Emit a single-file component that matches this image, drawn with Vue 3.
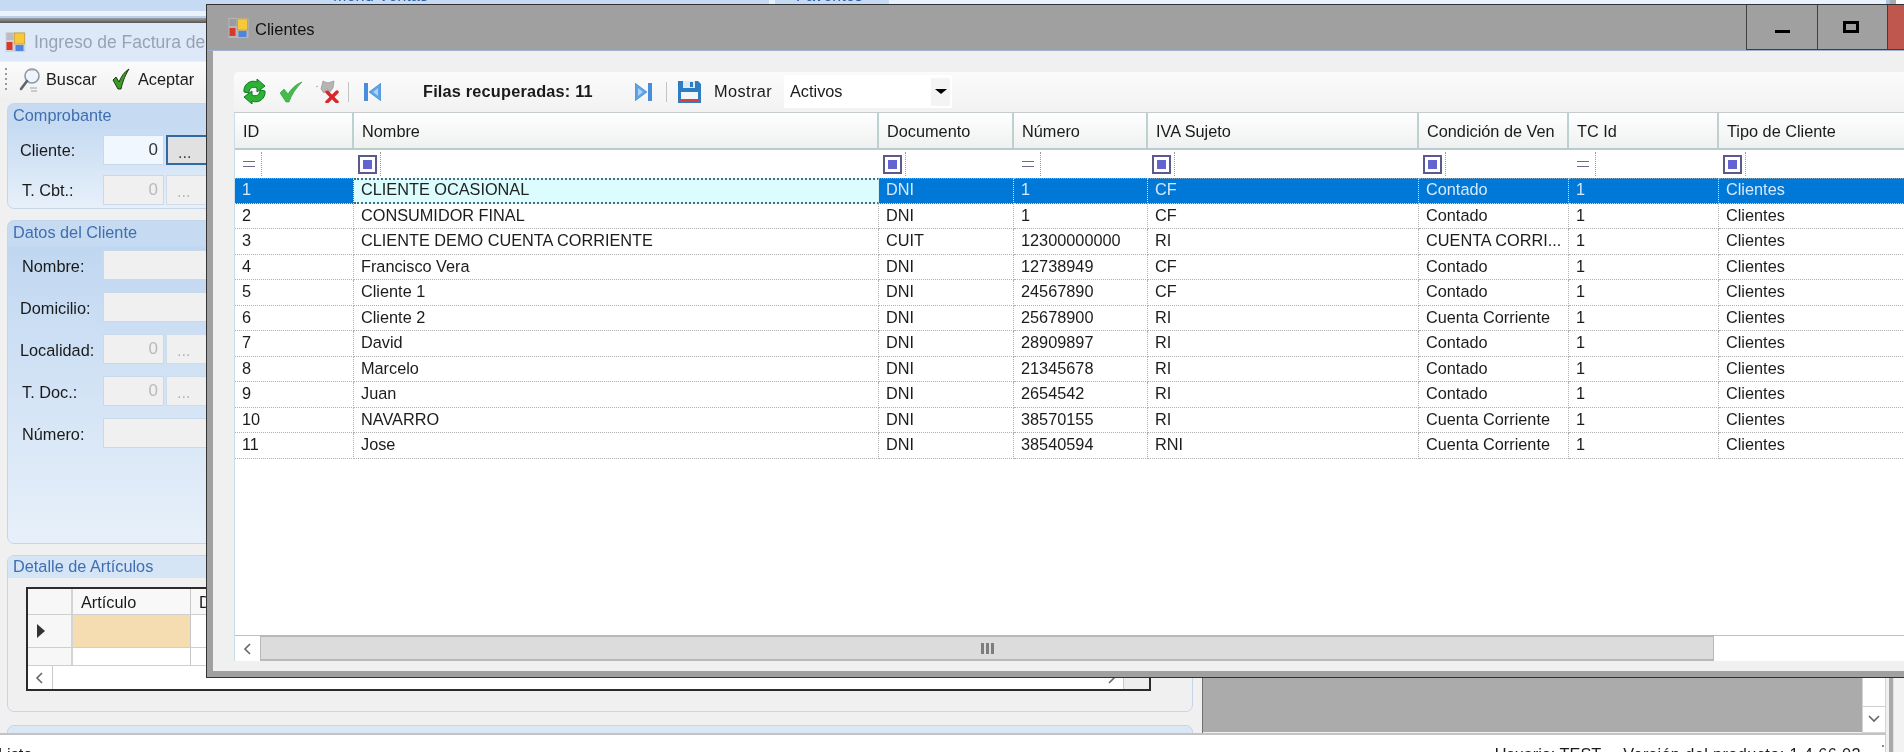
<script setup>
const columns = [
  { name: 'ID', filter: 'eq' },
  { name: 'Nombre', filter: 'box' },
  { name: 'Documento', filter: 'box' },
  { name: 'Número', filter: 'eq' },
  { name: 'IVA Sujeto', filter: 'box' },
  { name: 'Condición de Ven', filter: 'box' },
  { name: 'TC Id', filter: 'eq' },
  { name: 'Tipo de Cliente', filter: 'box' },
]
const rows = [
  ['1', 'CLIENTE OCASIONAL', 'DNI', '1', 'CF', 'Contado', '1', 'Clientes'],
  ['2', 'CONSUMIDOR FINAL', 'DNI', '1', 'CF', 'Contado', '1', 'Clientes'],
  ['3', 'CLIENTE DEMO CUENTA CORRIENTE', 'CUIT', '12300000000', 'RI', 'CUENTA CORRI...', '1', 'Clientes'],
  ['4', 'Francisco Vera', 'DNI', '12738949', 'CF', 'Contado', '1', 'Clientes'],
  ['5', 'Cliente 1', 'DNI', '24567890', 'CF', 'Contado', '1', 'Clientes'],
  ['6', 'Cliente 2', 'DNI', '25678900', 'RI', 'Cuenta Corriente', '1', 'Clientes'],
  ['7', 'David', 'DNI', '28909897', 'RI', 'Contado', '1', 'Clientes'],
  ['8', 'Marcelo', 'DNI', '21345678', 'RI', 'Contado', '1', 'Clientes'],
  ['9', 'Juan', 'DNI', '2654542', 'RI', 'Contado', '1', 'Clientes'],
  ['10', 'NAVARRO', 'DNI', '38570155', 'RI', 'Cuenta Corriente', '1', 'Clientes'],
  ['11', 'Jose', 'DNI', '38540594', 'RNI', 'Cuenta Corriente', '1', 'Clientes'],
]
</script>

<template>
  <div class="screen">
    <div class="strip">
      <div class="tabs">
        <div class="tab first"><span>Menú Ventas</span></div>
        <div class="tab second"><span>Favoritos</span></div>
        <div class="tabrest"></div>
        <div class="tabedge"></div>
        <div class="tabgrey"></div>
        <div class="tabwhite"></div>
      </div>
      <div class="band"></div>
      <div class="darkline"></div>
    </div>

    <div class="body">
      <div class="maincol">
        <div class="work">
          <div class="form">
            <div class="formtitle">
              <svg class="appicon" viewBox="0 0 20 20">
                <rect width="20" height="20" fill="#cfd3d8" />
                <rect x="1" y="1" width="7" height="7" fill="#b9bcc2" />
                <rect x="9" y="1" width="10" height="11" fill="#f7c93a" stroke="#c99a1c" stroke-width=".7" />
                <rect x="1" y="10" width="6" height="8" fill="#d8392c" />
                <rect x="10" y="13" width="8" height="6" fill="#4d86dc" />
              </svg>
              <span>Ingreso de Factura de</span>
            </div>
            <div class="formbar">
              <div class="grip"></div>
              <svg class="searchicon" viewBox="0 0 22 25">
                <circle cx="13" cy="9" r="7" fill="#eef4fa" stroke="#8a99a8" stroke-width="1.6" />
                <path d="M8 14 2 22" stroke="#5d6570" stroke-width="2.6" stroke-linecap="round" />
                <path d="M10 3h5M11 21h7M12 24h6" stroke="#9aa4ae" stroke-width="1.2" />
              </svg>
              <span class="barlabel">Buscar</span>
              <svg class="okicon" viewBox="0 0 18 22">
                <path d="M1 12 4 9l3 5c2-5 5-10 10-13-3 5-6 11-8 20H6Z" fill="#3c9a28" stroke="#1f3d12" stroke-width="1" />
              </svg>
              <span class="barlabel">Aceptar</span>
            </div>

            <div class="panels">
              <section class="panel blue p1">
                <h3>Comprobante</h3>
                <div class="fields f1">
                  <div class="field">
                    <label>Cliente:</label>
                    <div class="input num active">0</div>
                    <div class="dots focus">...</div>
                  </div>
                  <div class="field">
                    <label class="in">T. Cbt.:</label>
                    <div class="input num">0</div>
                    <div class="dots">...</div>
                  </div>
                </div>
              </section>

              <section class="panel blue p2">
                <h3>Datos del Cliente</h3>
                <div class="fields f2">
                  <div class="field">
                    <label class="in">Nombre:</label>
                    <div class="input wide"></div>
                  </div>
                  <div class="field">
                    <label>Domicilio:</label>
                    <div class="input wide"></div>
                  </div>
                  <div class="field">
                    <label>Localidad:</label>
                    <div class="input num">0</div>
                    <div class="dots">...</div>
                  </div>
                  <div class="field">
                    <label class="in">T. Doc.:</label>
                    <div class="input num">0</div>
                    <div class="dots">...</div>
                  </div>
                  <div class="field">
                    <label class="in">Número:</label>
                    <div class="input wide"></div>
                  </div>
                </div>
              </section>

              <section class="panel p3">
                <h3>Detalle de Artículos</h3>
                <div class="subgrid">
                  <div class="subhead">
                    <div class="rh"></div>
                    <div class="sc">Artículo</div>
                    <div class="sc rest">Descripción</div>
                  </div>
                  <div class="subrow one">
                    <div class="rh"><i class="rowarrow"></i></div>
                    <div class="sc peach"></div>
                    <div class="sc rest"></div>
                  </div>
                  <div class="subrow two">
                    <div class="rh"></div>
                    <div class="sc"></div>
                    <div class="sc rest"></div>
                  </div>
                  <div class="subscroll">
                    <div class="sb">
                      <svg viewBox="0 0 10 14" class="chev"><path d="M7 2 2 7l5 5" /></svg>
                    </div>
                    <div class="sbfill"></div>
                    <div class="sb">
                      <svg viewBox="0 0 10 14" class="chev"><path d="M3 2l5 5-5 5" /></svg>
                    </div>
                    <div class="sbcorner"></div>
                  </div>
                </div>
              </section>

              <section class="panel p4"></section>
            </div>
          </div>
          <div class="mdi"></div>
          <div class="vscroll">
            <div class="vbtn">
              <svg viewBox="0 0 14 10" class="chev"><path d="M2 2l5 5 5-5" /></svg>
            </div>
          </div>
        </div>
        <div class="status">
          <span class="ready">Listo</span>
          <span class="user">Usuario: TEST</span>
          <span class="version">Versión del producto: 1.4.66.02</span>
          <span class="statusdot"></span>
        </div>
      </div>
      <div class="sideedge">
        <div class="se1"></div>
        <div class="se2"></div>
        <div class="se3"></div>
      </div>
    </div>

    <div class="window">
      <div class="wintitle">
        <svg class="appicon" viewBox="0 0 20 20">
          <rect width="20" height="20" fill="#b6b6b6" />
          <rect x="1" y="1" width="7" height="7" fill="#9c9c9c" />
          <rect x="9" y="1" width="10" height="11" fill="#f7c93a" stroke="#c99a1c" stroke-width=".7" />
          <rect x="1" y="10" width="6" height="8" fill="#d8392c" />
          <rect x="10" y="13" width="8" height="6" fill="#4d86dc" />
        </svg>
        <span class="wintext">Clientes</span>
        <div class="winbtns">
          <div class="wb min"><i></i></div>
          <div class="wb max"><i></i></div>
          <div class="wb close"></div>
        </div>
      </div>

      <div class="wincontent">
        <div class="toolbar">
          <svg class="t-refresh" viewBox="1 0 23 25">
            <path d="M2 13C1 6 8 0 15 3V0l8 7-8 6V9C11 7 7 9 7 14Z" fill="#2fb136" stroke="#0c7a22" stroke-width="1" />
            <path d="M23 12c1 7-6 13-13 10v3l-8-7 8-6v4c4 2 8 0 8-5Z" fill="#2fb136" stroke="#0c7a22" stroke-width="1" />
          </svg>
          <svg class="t-check" viewBox="0 0 24 22">
            <path d="M1 12 5 8l4 5C12 8 17 3 23 1 17 7 13 13 10 21H7Z" fill="#46bb4a" stroke="#2c9b3c" stroke-width=".6" />
          </svg>
          <svg class="t-del" viewBox="0 0 24 23">
            <path d="M3 6 1 7M8 1 6 9l3 4 3-5 2 5 4-5 1-7-6 2-3-1Z" fill="#b5b5b5" stroke="#9a9a9a" stroke-width=".8" />
            <path d="M12 12 22 22M22 12 12 22" stroke="#d8262a" stroke-width="3.4" stroke-linecap="round" />
          </svg>
          <i class="tsep"></i>
          <svg class="t-nav" viewBox="0 0 17 18">
            <rect x="0" y="0" width="4" height="18" fill="#4a8edb" />
            <path d="M17 0v18L5 9Z" fill="#5fa2e6" stroke="#3f86d3" stroke-width=".6" />
            <path d="M14 5v8L9 9Z" fill="#a9d2f6" />
          </svg>
          <strong class="rowscount">Filas recuperadas: 11</strong>
          <svg class="t-nav last" viewBox="0 0 17 18">
            <rect x="13" y="0" width="4" height="18" fill="#4a8edb" />
            <path d="M0 0v18L12 9Z" fill="#5fa2e6" stroke="#3f86d3" stroke-width=".6" />
            <path d="M3 5v8l5-4Z" fill="#a9d2f6" />
          </svg>
          <i class="tsep second"></i>
          <svg class="t-save" viewBox="0 0 23 23">
            <path d="M0 1h20l3 3v19H0Z" fill="#2c7dc2" />
            <rect x="5" y="1" width="12" height="7" fill="#dfeaf3" />
            <rect x="12" y="2" width="3" height="5" fill="#2c7dc2" />
            <rect x="3" y="12" width="17" height="8" fill="#f3f6f8" />
            <rect x="1" y="19" width="21" height="3" fill="#d9403a" />
          </svg>
          <span class="mostrar">Mostrar</span>
          <div class="combo">
            <span>Activos</span>
            <div class="combobtn"><i></i></div>
          </div>
        </div>

        <div class="grid">
          <div class="ghead">
            <div v-for="c in columns" :key="c.name" class="hc">{{ c.name }}</div>
          </div>
          <div class="gfilter">
            <div v-for="c in columns" :key="c.name" class="fc">
              <div class="fslot">
                <i v-if="c.filter === 'eq'" class="eq"></i>
                <i v-else class="box"><b></b></i>
              </div>
            </div>
          </div>
          <div
            v-for="(r, ri) in rows"
            :key="r[0]"
            class="grow"
            :class="{ sel: ri === 0 }"
          >
            <div v-for="(v, ci) in r" :key="ci" class="gc" :class="{ cur: ri === 0 && ci === 1 }">{{ v }}</div>
          </div>
          <div class="gempty"></div>
          <div class="hscroll">
            <div class="hleft">
              <svg viewBox="0 0 10 14" class="chev"><path d="M7 2 2 7l5 5" /></svg>
            </div>
            <div class="hthumb"><i></i><i></i><i></i></div>
            <div class="htrack"></div>
          </div>
        </div>
      </div>
    </div>
  </div>
</template>

<style>
html, body { margin: 0; background: #f0f0f0; }
</style>

<style scoped>
.screen {
  position: relative;
  width: 1904px;
  height: 752px;
  overflow: hidden;
  background: #f0f0f0;
  font-family: "Liberation Sans", "Noto Sans", sans-serif;
  font-size: 16.3px;
  color: #1a1a1a;
  filter: blur(0.35px);
}

/* top strip */
.strip { height: 23px; display: flex; flex-direction: column; }
.tabs { height: 11px; display: flex; overflow: hidden; background: #e8f2fd; }
.tab { background: #c6dbf3; color: #2b5c9e; overflow: hidden; }
.tab span { display: block; margin-top: -13px; line-height: 16px; }
.tab.first { width: 769px; padding-left: 333px; box-sizing: border-box; }
.tab.second { width: 114px; margin-left: 6px; padding-left: 21px; box-sizing: border-box; }
.tabrest { flex: 1; }
.tabedge { width: 4px; background: #a9c6e8; }
.tabgrey { width: 6px; background: #aaa; }
.tabwhite { width: 8px; background: #fff; }
.band { height: 5px; background: #eaf2fc; border-bottom: 2px solid #b8d0ee; }
.darkline { height: 5px; background: linear-gradient(#a0a0a0, #555); }

.body { height: 729px; display: flex; }
.maincol { width: 1886px; display: flex; flex-direction: column; }
.work { height: 710px; display: flex; }

/* form behind */
.form {
  width: 1202px;
  border-right: 1px solid #6f6f6f;
  overflow: hidden;
  background: #f0f0f0;
}
.formtitle {
  height: 38px;
  padding: 0 0 0 5px;
  display: flex;
  align-items: center;
  gap: 8px;
  background: #dde9f9;
  color: #98a3b0;
  font-size: 17.5px;
  white-space: nowrap;
}
.appicon { width: 21px; height: 20px; flex: none; }
.formbar {
  height: 40px;
  margin-top: 1px;
  box-sizing: border-box;
  padding-bottom: 6px;
  display: flex;
  align-items: center;
  background: linear-gradient(#fbfbfb, #efefef);
  white-space: nowrap;
}
.grip {
  width: 2px;
  height: 22px;
  margin: 0 0 0 5px;
  background: repeating-linear-gradient(#9a9a9a 0 2px, transparent 2px 5px);
}
.searchicon { width: 22px; height: 25px; margin-left: 12px; }
.barlabel { margin-left: 5px; width: 52px; }
.okicon { width: 18px; height: 22px; margin-left: 14px; }
.formbar .okicon + .barlabel { margin-left: 8px; width: 62px; }

.panels { padding: 1px 9px 0 7px; }
.panel {
  border: 1px solid #c5d6e9;
  border-radius: 7px;
  margin-bottom: 11px;
  box-sizing: border-box;
  overflow: hidden;
}
.panel h3 {
  margin: 0;
  height: 25px;
  padding-left: 5px;
  font-size: 16.3px;
  font-weight: 400;
  line-height: 23px;
  color: #3f6fae;
  background: #c6daf2;
  white-space: nowrap;
}
.panel.blue { background: linear-gradient(#bdd5f0, #e7f0fa); }
.panel.p1 { height: 106px; }
.panel.p2 { height: 324px; }
.panel.p3 { height: 157px; margin-bottom: 13px; }
.panel.p3 h3 { height: 22px; line-height: 21px; background: #d6e5f6; }
.panel.p4 { height: 40px; background: #dbe7f5; }

.fields { display: flex; flex-direction: column; }
.f1 { gap: 10px; padding-top: 6px; }
.f2 { gap: 12px; padding-top: 4px; }
.field { height: 30px; display: flex; align-items: center; }
.field label { width: 95px; padding-left: 12px; box-sizing: border-box; flex: none; }
.f1 .field label { padding-top: 1px; }
.f2 .field label { padding-top: 3px; }
.field label.in { padding-left: 14px; }
.input {
  width: 61px;
  height: 30px;
  box-sizing: border-box;
  border: 1px solid #c9d9ec;
  background: #f0f0f0;
  text-align: right;
  padding-right: 5px;
  line-height: 27px;
  color: #b9b9b9;
  font-size: 17px;
}
.input.active { background: #f0f7fe; color: #333; }
.input.wide { width: 400px; }
.dots {
  width: 60px;
  height: 30px;
  margin-left: 2px;
  box-sizing: border-box;
  border: 1px solid #cfdcea;
  background: #f0f0f0;
  padding-left: 10px;
  line-height: 30px;
  color: #b5b5b5;
}
.dots.focus { background: #e1e1e1; border: 2px solid #2f6aa5; color: #444; }

/* sub grid */
.subgrid {
  width: 1125px;
  height: 104px;
  margin: 9px 0 0 18px;
  box-sizing: border-box;
  border: 2px solid #2b2b2b;
  background: #fff;
  display: flex;
  flex-direction: column;
  overflow: hidden;
}
.subhead, .subrow { display: flex; border-bottom: 1px solid #cfcfcf; }
.subhead { height: 25px; }
.subrow.one { height: 32px; }
.subrow.two { height: 17px; }
.rh { width: 43px; flex: none; background: #f7f7f7; border-right: 2px solid #d4d4d4; position: relative; }
.sc { width: 118px; flex: none; border-right: 1px solid #c8c8c8; padding-left: 8px; box-sizing: border-box; white-space: nowrap; }
.sc.rest { flex: 1; }
.subhead .sc { background: #f8f8f8; line-height: 26px; }
.peach { background: #f5dcb1; }
.rowarrow {
  position: absolute;
  left: 9px;
  top: 9px;
  border-left: 8px solid #333;
  border-top: 7px solid transparent;
  border-bottom: 7px solid transparent;
}
.subscroll { flex: 1; display: flex; }
.sb { width: 24px; display: flex; align-items: center; justify-content: center; border-right: 1px solid #c9c9c9; background: #fff; }
.sb:last-of-type { border-left: 1px solid #c9c9c9; }
.sbfill { flex: 1; }
.sbcorner { width: 25px; background: #eee; }
.chev { width: 10px; height: 14px; fill: none; stroke: #666; stroke-width: 1.6; }

.mdi { flex: 1; background: #ababab; margin-bottom: 1px; }
.vscroll {
  width: 24px;
  box-sizing: border-box;
  border: 1px solid #d4d4d4;
  background: #fff;
  display: flex;
  flex-direction: column;
  justify-content: flex-end;
}
.vbtn { height: 24px; margin-bottom: 1px; border-top: 1px solid #cfcfcf; display: flex; align-items: center; justify-content: center; }
.vbtn .chev { width: 14px; height: 10px; }

/* status */
.status {
  height: 19px;
  box-sizing: border-box;
  border-top: 2px solid #c3c3c3;
  background: #fff;
  display: flex;
  align-items: flex-start;
  padding-top: 9px;
  line-height: 20px;
  white-space: nowrap;
  overflow: hidden;
  border-right: 1px solid #d0d0d0;
}
.ready { margin-left: -2px; }
.user { margin-left: auto; }
.version { margin-left: 22px; margin-right: 21px; letter-spacing: 0.4px; }
.statusdot { width: 2px; height: 2px; margin-top: 1px; background: #888; margin-right: 1px; }

.sideedge { flex: 1; display: flex; }
.se1 { width: 3px; background: #f0f0f0; }
.se2 { width: 4px; background: #a9a9a9; }
.se3 { flex: 1; background: #f2f2f2; border-left: 1px solid #e0e0e0; }

/* clientes window */
.window {
  position: absolute;
  left: 206px;
  top: 4px;
  width: 1698px;
  height: 674px;
  box-sizing: border-box;
  border: 1px solid #333;
  border-right: 0;
  background: #a0a0a0;
  padding: 0 0 6px 6px;
  display: flex;
  flex-direction: column;
}
.wintitle {
  height: 46px;
  margin-left: -6px;
  padding-left: 21px;
  display: flex;
  align-items: flex-start;
  flex: none;
  box-sizing: border-box;
  border-bottom: 1px solid #9db4d0;
}
.wintitle .appicon { margin-top: 13px; }
.wintext { margin: 12px 0 0 6px; color: #111; font-size: 16.5px; line-height: 24px; }
.winbtns { margin-left: auto; display: flex; height: 45px; }
.wb {
  width: 71px;
  height: 45px;
  box-sizing: border-box;
  border-left: 1px solid #3f3f3f;
  border-bottom: 1px solid #3f3f3f;
  position: relative;
}
.wb.max { width: 70px; }
.wb.close { width: 17px; background: #c0574e; }
.min i { position: absolute; left: 28px; top: 25px; width: 15px; height: 3px; background: #000; }
.max i { position: absolute; left: 25px; top: 16px; width: 16px; height: 12px; box-sizing: border-box; border: 3px solid #000; }

.wincontent {
  flex: 1;
  min-height: 0;
  background: #f0f0f0;
  padding: 21px 0 10px 21px;
  display: flex;
  flex-direction: column;
}
.toolbar {
  height: 40px;
  flex: none;
  box-sizing: border-box;
  padding-bottom: 1px;
  display: flex;
  align-items: center;
  background: linear-gradient(#fbfbfb, #f2f2f2);
  border-radius: 4px 0 0 0;
  white-space: nowrap;
}
.t-refresh { width: 25px; height: 25px; margin-left: 8px; }
.t-check { width: 24px; height: 22px; margin-left: 12px; }
.t-del { width: 24px; height: 23px; margin-left: 12px; }
.tsep { width: 1px; height: 20px; background: #c4c4c4; margin-left: 9px; }
.t-nav { width: 17px; height: 18px; margin-left: 15px; }
.rowscount { margin-left: 42px; width: 212px; font-size: 16.3px; font-weight: 700; color: #1a1a1a; letter-spacing: 0.2px; }
.t-nav.last { margin-left: 0; }
.tsep.second { margin-left: 14px; }
.t-save { width: 23px; height: 23px; margin-left: 11px; }
.mostrar { margin-left: 13px; width: 61px; letter-spacing: 0.4px; }
.combo {
  width: 168px;
  height: 33px;
  margin-left: 9px;
  box-sizing: border-box;
  padding-left: 6px;
  background: #fff;
  display: flex;
  align-items: center;
  justify-content: space-between;
}
.combobtn { width: 19px; height: 28px; margin-right: 2px; background: #f4f4f4; position: relative; }
.combobtn i {
  position: absolute;
  left: 4px;
  top: 11px;
  border-top: 5px solid #000;
  border-left: 6px solid transparent;
  border-right: 6px solid transparent;
}

.grid {
  flex: 1;
  min-height: 0;
  display: flex;
  flex-direction: column;
  box-sizing: border-box;
  border-top: 1px solid #c6cbcb;
  border-left: 1px solid #c9dde6;
  background: #fff;
  overflow: hidden;
}
.ghead, .gfilter, .grow {
  display: grid;
  grid-template-columns: 119px 525px 135px 134px 271px 150px 150px 200px;
  flex: none;
}
.ghead { height: 37px; box-sizing: border-box; border-bottom: 2px solid #b7cdcd; }
.hc {
  padding-left: 8px;
  line-height: 37px;
  overflow: hidden;
  white-space: nowrap;
  background: linear-gradient(#fff, #eff0f0);
  border-right: 2px solid #bdd1d1;
  box-sizing: border-box;
}
.gfilter { height: 28px; box-sizing: border-box; }
.fc { padding: 2px 0 0; }
.fslot {
  width: 27px;
  height: 24px;
  box-sizing: border-box;
  border-right: 1px dotted #9a9a9a;
  display: flex;
  align-items: center;
  padding-left: 4px;
}
.eq { display: block; width: 12px; height: 4px; margin-left: 4px; border-top: 1.5px solid #6a6a90; border-bottom: 1.5px solid #6a6a90; }
.box {
  display: block;
  width: 19px;
  height: 19px;
  box-sizing: border-box;
  border: 2px solid #5a5a8c;
  padding: 3px;
  background: #fff;
}
.box b { display: block; width: 100%; height: 100%; background: #6464d0; }

.grow { height: 25.5px; }
.gc {
  padding: 0 4px 0 7px;
  line-height: 23px;
  overflow: hidden;
  white-space: nowrap;
  box-sizing: border-box;
  border-right: 1px dotted #b0b0b0;
  border-bottom: 1px dotted #b0b0b0;
  color: #1c1c1c;
}
.grow.sel { background: #0078d7; }
.grow.sel .gc { color: #d6e8f9; border-color: #cfe3f5; border-top: 1px dotted #7fa9c9; line-height: 20px; }
.grow.sel .gc.cur { background: #dcfdfe; color: #222; border-top: 2px dotted #4a6a80; border-bottom: 2px dotted #4a6a80; line-height: 19px; }
.gempty { flex: 1; }
.hscroll { height: 26px; flex: none; display: flex; box-sizing: border-box; background: #fff; }
.hleft { width: 25px; display: flex; align-items: center; justify-content: center; border-top: 1px solid #c0c0c0; }
.hthumb {
  width: 1454px;
  box-sizing: border-box;
  background: #dcdcdc;
  border: 1px solid #b8b8b8;
  border-width: 2px 1px 2px 1px;
  display: flex;
  align-items: center;
  justify-content: center;
  gap: 2px;
}
.hthumb i { width: 3px; height: 11px; background: #7d7d7d; }
.htrack { flex: 1; border-top: 1px solid #c0c0c0; }
</style>
